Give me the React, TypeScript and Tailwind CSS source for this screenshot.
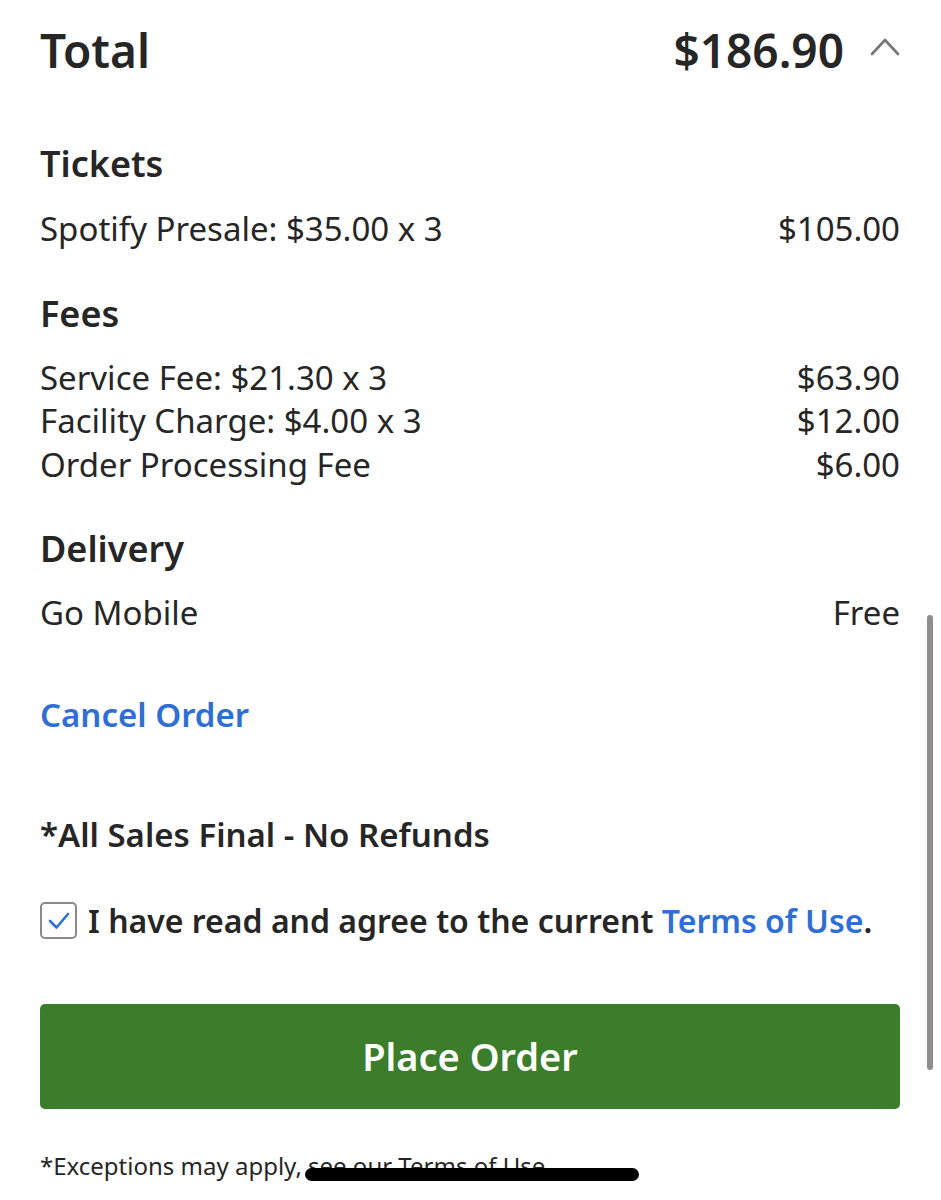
import React from 'react';

type Line = {
  label: string;
  amount: string;
};

const fees: Array<Line> = [
  { label: 'Service Fee: $21.30 x 3', amount: '$63.90' },
  { label: 'Facility Charge: $4.00 x 3', amount: '$12.00' },
  { label: 'Order Processing Fee', amount: '$6.00' },
];

function Row({ label, amount }: Line) {
  return (
    <div className="flex justify-between text-[33px] leading-[43.5px] text-[#262626]">
      <span>{label}</span>
      <span>{amount}</span>
    </div>
  );
}

function SectionTitle({ children }: { children: React.ReactNode }) {
  return (
    <p className="text-[36px] leading-[44px] font-semibold text-[#262626]">{children}</p>
  );
}

function App() {
  return (
    <div
      className="relative w-[941px] h-[1200px] bg-white overflow-hidden"
      style={{ fontFamily: '"Noto Sans", Lato, sans-serif' }}
    >
      <div className="pl-[40px] pr-[41px] pt-[24px]">
        <div className="flex items-center justify-between h-[52px]">
          <span className="text-[46px] leading-[52px] font-semibold text-[#262626]">Total</span>
          <div className="flex items-center gap-[26px]">
            <span className="text-[46px] leading-[52px] font-semibold text-[#262626]">$186.90</span>
            <svg width="30" height="20" viewBox="0 0 30 20" fill="none" className="mt-[-6px]">
              <polyline points="2,17 15,3 28,17" stroke="#767676" strokeWidth="2.6" strokeLinecap="round" strokeLinejoin="round" />
            </svg>
          </div>
        </div>

        <div className="mt-[66px]">
          <SectionTitle>Tickets</SectionTitle>
          <div className="mt-[21px]">
            <Row label="Spotify Presale: $35.00 x 3" amount="$105.00" />
          </div>
        </div>

        <div className="mt-[41px]">
          <SectionTitle>Fees</SectionTitle>
          <div className="mt-[20px]">
            {fees.map((item) => (
              <Row key={item.label} label={item.label} amount={item.amount} />
            ))}
          </div>
        </div>

        <div className="mt-[41px]">
          <SectionTitle>Delivery</SectionTitle>
          <div className="mt-[20px]">
            <Row label="Go Mobile" amount="Free" />
          </div>
        </div>

        <p className="mt-[58px] text-[33px] leading-[44px] font-semibold text-[#2f6fd4]">Cancel Order</p>

        <p className="mt-[76px] text-[33px] leading-[44px] font-semibold text-[#262626]">*All Sales Final - No Refunds</p>

        <div className="mt-[42px] flex items-center gap-[11px] h-[44px]">
          <span className="flex items-center justify-center w-[37px] h-[37px] rounded-[5px] border-2 border-[#8a8a8a] bg-white shrink-0">
            <svg width="24" height="20" viewBox="0 0 24 20" fill="none">
              <polyline points="3,10 9.5,16.5 21,3" stroke="#2f6fd4" strokeWidth="2.6" strokeLinecap="round" strokeLinejoin="round" />
            </svg>
          </span>
          <p className="text-[32px] leading-[44px] font-semibold text-[#262626] whitespace-nowrap">
            I have read and agree to the current
            {' '}
            <span className="text-[#2f6fd4]">Terms of Use</span>
            .
          </p>
        </div>

        <button
          type="button"
          className="mt-[61px] w-full h-[105px] rounded-[5px] bg-[#3b7d2b] text-white text-[38px] font-semibold"
        >
          Place Order
        </button>

        <p className="mt-[42px] text-[24px] leading-[30px] text-[#262626]">
          *Exceptions may apply, see our Terms of Use.
        </p>
      </div>

      {/* scroll indicator */}
      <span className="absolute left-[927px] top-[615px] w-[6px] h-[455px] rounded-full bg-[#8e8e8e]" />
      {/* home indicator */}
      <span className="absolute left-[305px] top-[1168px] w-[334px] h-[13px] rounded-full bg-black" />
    </div>
  );
}

export default App;
